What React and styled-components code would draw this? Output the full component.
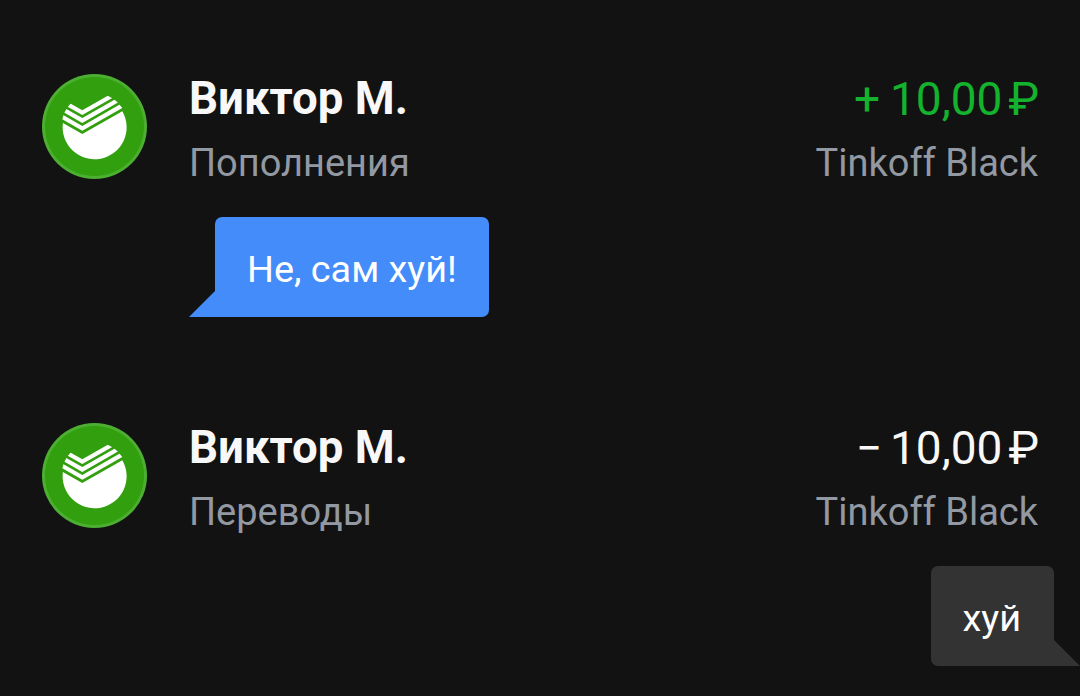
import React from 'react'
import styled, { createGlobalStyle } from 'styled-components'

const GlobalStyle = createGlobalStyle`
    body {
        margin: 0;
        background: #121212;
        font-family: Roboto, "Noto Sans", sans-serif;
    }
`

const Page = styled.main`
    box-sizing: border-box;
    width: 1080px;
    height: 696px;
    padding-top: 71px;
    display: flex;
    flex-direction: column;
    gap: 103px;
    overflow: hidden;
    background: #121212;
`

const Operation = styled.article`
    display: flex;
    flex-direction: column;
    flex: none;
    height: 246px;
`

const Row = styled.div`
    display: flex;
    flex: none;
    padding: 0 42px 0 42px;
    height: 146px;
`

const Avatar = styled.svg`
    flex: none;
    width: 105px;
    height: 105px;
    margin: 3px 40px 0 0;
`

const Info = styled.div`
    display: flex;
    flex-direction: column;
    gap: 14px;
    flex: 1;
    padding-top: 1px;
    align-items: ${props => props.$right ? 'flex-end' : 'flex-start'};
    white-space: nowrap;
`

const Name = styled.span`
    padding-left: 2px;
    font-size: 45.6px;
    line-height: 54px;
    font-weight: 700;
    color: #f8f8f8;
`

const Amount = styled.span`
    display: flex;
    margin-right: -1px;
    font-size: 46px;
    line-height: 54px;
    color: ${props => props.$income ? '#14b32d' : '#f8f8f8'};
`

const Sign = styled.span`
    margin-right: ${props => props.$income ? '10px' : '8px'};
`

const Currency = styled.span`
    margin-left: 6px;
`

const Caption = styled.span`
    padding-left: 2px;
    font-size: 38px;
    line-height: 46px;
    color: #9299a2;
`

const Bubble = styled.div`
    position: relative;
    box-sizing: border-box;
    height: 100px;
    padding: ${props => props.$own ? '29px 33px 0 32px' : '29px 32px 0'};
    font-size: 37.8px;
    line-height: 46px;
    white-space: nowrap;
    color: #fff;
    background: ${props => props.$own ? '#333333' : '#448cfa'};
    border-radius: ${props => props.$own ? '7px 7px 0 7px' : '7px 7px 7px 0'};
    align-self: ${props => props.$own ? 'flex-end' : 'flex-start'};
    margin: ${props => props.$own ? '0 26px 0 0' : '0 0 0 215px'};

    &::after {
        content: '';
        position: absolute;
        bottom: 0;
        ${props => props.$own ? 'left: 100%;' : 'right: 100%;'}
        width: 26px;
        height: 26px;
        background: inherit;
        clip-path: ${props => props.$own ? 'polygon(0 0, 100% 100%, 0 100%)' : 'polygon(100% 0, 100% 100%, 0 100%)'};
    }
`

const SberLogo = () => (
    <Avatar viewBox="0 0 105 105">
        <defs>
            <clipPath id="disc">
                <circle cx="52.6" cy="52" r="33" />
            </clipPath>
        </defs>
        <circle cx="52.5" cy="52.5" r="52.5" fill="#4caf32" />
        <circle cx="52.5" cy="52.5" r="49.5" fill="#329f0e" />
        <g clipPath="url(#disc)" fill="#fff">
            <path d="M10.3 19.2 L40.3 36.3 L100.3 2.1 V6.9 L40.3 41.1 L10.3 24 Z" />
            <path d="M10.3 27 L40.3 44.1 L100.3 9.9 V14.7 L40.3 48.9 L10.3 31.8 Z" />
            <path d="M10.3 34.8 L40.3 51.9 L100.3 17.7 V22.5 L40.3 56.7 L10.3 39.6 Z" />
        </g>
        <path d="M20.9 49 L40.3 60 L80.3 37.2 A32 32 0 1 1 20.9 49 Z" fill="#fff" />
    </Avatar>
)

const operations = [
    { id: 1, name: 'Виктор М.', category: 'Пополнения', sign: '+', sum: '10,00', card: 'Tinkoff Black', message: 'Не, сам хуй!', income: true },
    { id: 2, name: 'Виктор М.', category: 'Переводы', sign: '−', sum: '10,00', card: 'Tinkoff Black', message: 'хуй', income: false },
]

const App = () => {
    return (
        <>
            <GlobalStyle />
            <Page>
                {operations.map(item => (
                    <Operation key={item.id}>
                        <Row>
                            <SberLogo />
                            <Info>
                                <Name>{item.name}</Name>
                                <Caption>{item.category}</Caption>
                            </Info>
                            <Info $right>
                                <Amount $income={item.income}>
                                    <Sign $income={item.income}>{item.sign}</Sign>
                                    <span>{item.sum}</span>
                                    <Currency>₽</Currency>
                                </Amount>
                                <Caption>{item.card}</Caption>
                            </Info>
                        </Row>
                        <Bubble $own={!item.income}>{item.message}</Bubble>
                    </Operation>
                ))}
            </Page>
        </>
    )
}

export default App
